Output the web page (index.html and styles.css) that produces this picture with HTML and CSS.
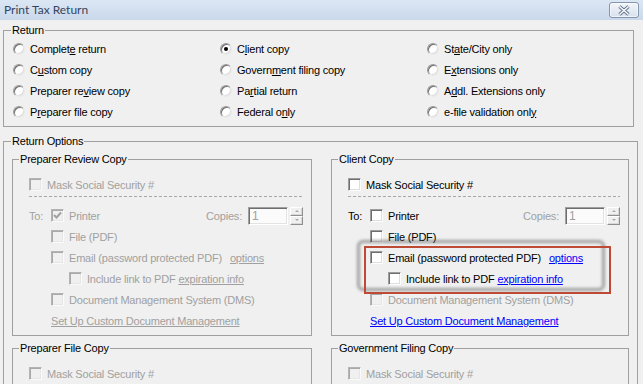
FILE: index.html
```html
<!DOCTYPE html>
<html lang="en">
<head>
<meta charset="utf-8">
<title>Print Tax Return</title>
<link rel="stylesheet" href="styles.css">
</head>
<body>
<div class="titlebar">
  <span class="title">Print Tax Return</span>
  <span class="close">
    <svg width="14" height="11" viewBox="0 0 14 11">
      <path d="M2.5 1.5 L11.5 9.5 M11.5 1.5 L2.5 9.5" stroke="#66768c" stroke-width="3.4" fill="none"/>
      <path d="M2.5 1.5 L11.5 9.5 M11.5 1.5 L2.5 9.5" stroke="#fbfcfe" stroke-width="1.5" fill="none"/>
    </svg>
  </span>
</div>

<section class="box return">
  <div class="legend outer">Return</div>
  <div class="radio-grid">
    <div class="radio"><span class="rb"></span><span>Complet<u>e</u> return</span></div>
    <div class="radio"><span class="rb on"></span><span>C<u>l</u>ient copy</span></div>
    <div class="radio"><span class="rb"></span><span>St<u>a</u>te/City only</span></div>
    <div class="radio"><span class="rb"></span><span>C<u>u</u>stom copy</span></div>
    <div class="radio"><span class="rb"></span><span>Govern<u>m</u>ent filing copy</span></div>
    <div class="radio"><span class="rb"></span><span>E<u>x</u>tensions only</span></div>
    <div class="radio"><span class="rb"></span><span>Preparer re<u>v</u>iew copy</span></div>
    <div class="radio"><span class="rb"></span><span>Pa<u>r</u>tial return</span></div>
    <div class="radio"><span class="rb"></span><span>A<u>d</u>dl. Extensions only</span></div>
    <div class="radio"><span class="rb"></span><span>P<u>r</u>eparer file copy</span></div>
    <div class="radio"><span class="rb"></span><span>Federal o<u>n</u>ly</span></div>
    <div class="radio"><span class="rb"></span><span>e-file validation onl<u>y</u></span></div>
  </div>
</section>

<section class="box options">
  <div class="legend outer">Return Options</div>
  <div class="copies-grid">

    <div class="box copy dis">
      <div class="legend">Preparer Review Copy</div>
      <div class="copy-body">
        <div class="row"><span class="cb"></span><span>Mask Social Security #</span></div>
        <div class="sep"></div>
        <div class="row">
          <span class="to">To:</span>
          <span class="cb"><svg width="9" height="9" viewBox="0 0 9 9"><path d="M1 4 L3.5 6.5 L8 1.5" stroke="#a0a0a0" stroke-width="2" fill="none"/></svg></span><span>Printer</span>
          <span class="copies"><span class="dim">Copies:</span><span class="num">1</span><span class="spin"><span class="up"></span><span class="down"></span></span></span>
        </div>
        <div class="row ind1"><span class="cb"></span><span>File (PDF)</span></div>
        <div class="row ind1"><span class="cb"></span><span>Email (password protected PDF)</span><span class="link opt">options</span></div>
        <div class="row ind2"><span class="cb"></span><span>Include link to PDF <span class="link">expiration info</span></span></div>
        <div class="row ind1"><span class="cb"></span><span>Document Management System (DMS)</span></div>
        <div class="row ind1"><span class="link">Set Up Custom Document Management</span></div>
      </div>
    </div>

    <div class="box copy">
      <div class="legend">Client Copy</div>
      <div class="copy-body">
        <div class="row"><span class="cb"></span><span>Mask Social Security #</span></div>
        <div class="sep"></div>
        <div class="row">
          <span class="to">To:</span>
          <span class="cb"></span><span>Printer</span>
          <span class="copies"><span class="dim">Copies:</span><span class="num">1</span><span class="spin"><span class="up"></span><span class="down"></span></span></span>
        </div>
        <div class="row ind1"><span class="cb"></span><span>File (PDF)</span></div>
        <div class="hl">
          <div class="row ind1"><span class="cb"></span><span>Email (password protected PDF)</span><span class="link opt">options</span></div>
          <div class="row ind2"><span class="cb"></span><span>Include link to PDF <span class="link">expiration info</span></span></div>
        </div>
        <div class="row ind1 dim"><span class="cb off"></span><span>Document Management System (DMS)</span></div>
        <div class="row ind1"><span class="link">Set Up Custom Document Management</span></div>
      </div>
    </div>

    <div class="box copy lower dis">
      <div class="legend">Preparer File Copy</div>
      <div class="copy-body">
        <div class="row"><span class="cb"></span><span>Mask Social Security #</span></div>
      </div>
    </div>

    <div class="box copy lower">
      <div class="legend">Government Filing Copy</div>
      <div class="copy-body">
        <div class="row dim"><span class="cb off"></span><span>Mask Social Security #</span></div>
      </div>
    </div>

  </div>
</section>
</body>
</html>
```

FILE: styles.css
```css
* { box-sizing: border-box; }

html, body { margin: 0; padding: 0; }

body {
  width: 643px;
  height: 384px;
  overflow: hidden;
  background: #f0f0f0;
  font-family: "Liberation Sans", Arial, sans-serif;
  font-size: 11px;
  letter-spacing: -0.2px;
  color: #000;
}

u { text-decoration: underline; text-underline-offset: 1px; }

/* title bar */
.titlebar {
  height: 20px;
  display: flex;
  justify-content: space-between;
  align-items: flex-start;
  padding: 0 4px;
  background: linear-gradient(#dce7f4, #c9d8eb);
}
.title {
  font-family: "Lato", "Noto Sans", sans-serif;
  font-size: 12px;
  line-height: 20px;
  letter-spacing: 0;
  color: #34455c;
}
.close {
  width: 30px;
  height: 16px;
  margin-top: 2px;
  border: 1px solid #8595ab;
  border-radius: 3px;
  background: linear-gradient(#f2f5fa, #d8e1ed);
  display: flex;
  align-items: center;
  justify-content: center;
  box-shadow: inset 0 0 0 1px rgba(255,255,255,0.6);
}

/* group boxes */
.box {
  border: 1px solid #a0a0a0;
}
.legend {
  width: fit-content;
  height: 13px;
  line-height: 13px;
  margin: -7px 0 0 6px;
  padding: 0 1px;
  background: #f0f0f0;
  color: #000;
  white-space: nowrap;
}
.legend.outer { margin-left: 7px; }

.return {
  margin: 10px 0 0 3px;
  width: 631px;
}
.radio-grid {
  display: grid;
  grid-template-columns: 207px 207px 1fr;
  grid-auto-rows: 21px;
  padding: 1px 0 4px 9px;
}
.radio {
  display: flex;
  align-items: center;
  white-space: nowrap;
}
.rb {
  width: 12px;
  height: 12px;
  flex: none;
  margin-right: 5px;
  border-radius: 50%;
  border: 1px solid;
  border-color: #9a9a9a #e8e8e8 #e8e8e8 #9a9a9a;
  box-shadow: inset 1px 1px 0 #6f6f6f, inset -1px -1px 0 #dcdcdc;
  background: #fff;
  display: flex;
  align-items: center;
  justify-content: center;
}
.rb.on::after {
  content: "";
  width: 4px;
  height: 4px;
  border-radius: 50%;
  background: #000;
}

.options {
  margin: 14px 0 0 3px;
  width: 635px;
  height: 260px;
}
.copies-grid {
  display: grid;
  grid-template-columns: 300px 298px;
  column-gap: 19px;
  row-gap: 12px;
  margin: 11px 0 0 8px;
}
.copy-body {
  padding: 8px 8px 4px 16px;
}
.lower .copy-body { padding-bottom: 40px; }

.row {
  display: flex;
  align-items: center;
  height: 21px;
  white-space: nowrap;
}
.ind1 { padding-left: 22px; }
.ind2 { padding-left: 40px; }
.to { width: 22px; flex: none; }

.cb {
  width: 13px;
  height: 13px;
  flex: none;
  margin-right: 5px;
  border: 1px solid;
  border-color: #9d9d9d #fdfdfd #fdfdfd #9d9d9d;
  box-shadow: inset 1px 1px 0 #6e6e6e, inset -1px -1px 0 #dedede;
  background: #fff;
  display: flex;
  align-items: center;
  justify-content: center;
}
.dis .copy-body { color: #a0a0a0; }
.dis .cb, .cb.off {
  border-color: #b4b4b4 #fafafa #fafafa #b4b4b4;
  box-shadow: inset 1px 1px 0 #a9a9a9, inset -1px -1px 0 #e6e6e6;
  background: #f0f0f0;
}
.dim { color: #a0a0a0; }

.sep {
  height: 1px;
  margin: 1px 0 8px;
  background: repeating-linear-gradient(90deg, #a8a8a8 0 3px, transparent 3px 5px);
}

.copies {
  margin-left: auto;
  display: flex;
  align-items: center;
}
.num {
  width: 40px;
  height: 18px;
  margin-left: 6px;
  padding-left: 3px;
  line-height: 16px;
  font-size: 12px;
  color: #a0a0a0;
  background: #fbfbfb;
  border: 1px solid;
  border-color: #a0a0a0 #fff #fff #a0a0a0;
  box-shadow: inset 1px 1px 0 #6d6d6d, inset -1px -1px 0 #e3e3e3;
}
.spin {
  width: 13px;
  height: 18px;
  margin-left: 2px;
  display: flex;
  flex-direction: column;
}
.spin span {
  flex: 1;
  border: 1px solid;
  border-color: #fff #8f8f8f #8f8f8f #fff;
  box-shadow: inset -1px -1px 0 #d8d8d8;
  background: #f0f0f0;
  display: flex;
  align-items: center;
  justify-content: center;
}
.spin .up::after {
  content: "";
  border-left: 2px solid transparent;
  border-right: 2px solid transparent;
  border-bottom: 2px solid #a8a8a8;
}
.spin .down::after {
  content: "";
  border-left: 2px solid transparent;
  border-right: 2px solid transparent;
  border-top: 2px solid #a8a8a8;
}

.link {
  color: #0000ff;
  text-decoration: underline;
  text-underline-offset: 1px;
}
.dis .link { color: #a0a0a0; }
.opt { margin-left: 8px; }

/* highlight annotation over the Email rows */
.hl { position: relative; }
.hl::before {
  content: "";
  position: absolute;
  left: 9px;
  top: -7px;
  width: 242px;
  height: 45px;
  border: 3px solid rgba(60, 60, 60, 0.45);
  border-radius: 6px;
  filter: blur(1.5px);
  pointer-events: none;
}
.hl::after {
  content: "";
  position: absolute;
  left: 16px;
  top: -1px;
  width: 243px;
  height: 44px;
  border: 2px solid #bd4a34;
  pointer-events: none;
}
```
